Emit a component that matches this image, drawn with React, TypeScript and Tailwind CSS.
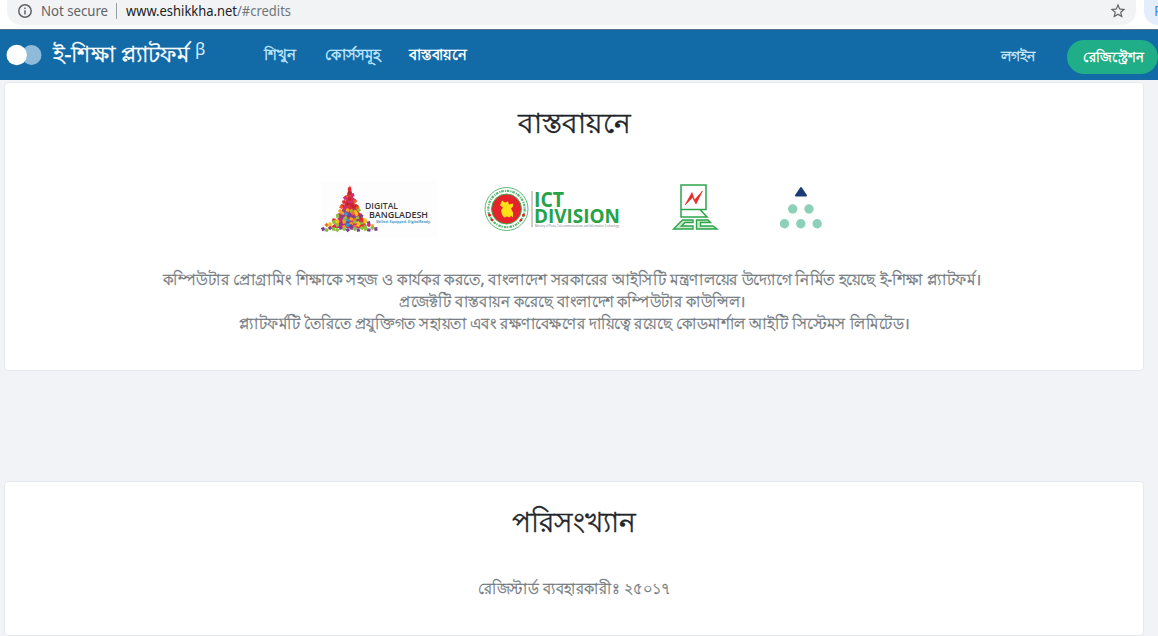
const WARM = ["#e5262c", "#c8232c", "#ee5a23", "#d6247f"];
const MIXED = ["#d6247f", "#7b3f98", "#e5262c", "#f6a21c", "#ee7623", "#8cbf3f", "#2b9fd0", "#f6c21c"];

function confettiPieces() {
  const pieces: { x: number; y: number; c: string; a: number }[] = [];
  for (let row = 0; row < 14; row++) {
    const half = row < 10 ? 0.6 + row * 1.25 : 12 + (row - 9) * 3.6;
    const count = Math.max(1, Math.round(half * 0.62));
    for (let i = 0; i < count; i++) {
      const x = 28.5 + (count === 1 ? 0 : -half + (2 * half * i) / (count - 1));
      const palette = row < 7 ? WARM : MIXED;
      const k = (row * 5 + i * 3 + ((i * row) % 4)) % palette.length;
      pieces.push({ x, y: 9 + row * 3 + ((i * 7 + row) % 3) - 1, c: palette[k], a: (i * 37 + row * 19) % 90 });
    }
  }
  return pieces;
}

function DigitalBangladesh() {
  return (
    <svg width="116" height="56" viewBox="0 0 116 56" className="shrink-0">
      <rect width="116" height="56" fill="#fdfdfd" />
      <path d="M29 4l1.5 6 4 15 6 10 6 12H11l7-12 5-10 4-15z" fill="#d23a45" />
      <path d="M19 35l7-6 9 6 8 12H13z" fill="#d12c78" opacity=".75" />
      {confettiPieces().map((p, i) => (
        <rect key={i} x={p.x - 1.7} y={p.y - 1.6} width="3.4" height="3.2" fill={p.c} transform={`rotate(${p.a} ${p.x} ${p.y})`} />
      ))}
      <text x="44" y="27.5" fontFamily="Open Sans, sans-serif" fontSize="9" fontWeight="600" fill="#3b3b3b" textLength="33" lengthAdjust="spacingAndGlyphs">DIGITAL</text>
      <text x="48" y="36.5" fontFamily="Open Sans, sans-serif" fontSize="9" fontWeight="600" fill="#333" textLength="59" lengthAdjust="spacingAndGlyphs">BANGLADESH</text>
      <text x="55" y="42.3" fontFamily="Open Sans, sans-serif" fontSize="4" fontWeight="700" fill="#409ccb" textLength="55" lengthAdjust="spacingAndGlyphs">Skilled. Equipped. DigitalReady.</text>
    </svg>
  );
}

function IctDivision() {
  return (
    <svg width="138" height="46" viewBox="0 0 138 46" className="shrink-0 overflow-visible">
      <circle cx="23.5" cy="23" r="21.5" fill="#fff" stroke="#5cb973" strokeWidth="1" />
      <circle cx="23.5" cy="23" r="18.2" fill="none" stroke="#5cb973" strokeWidth="2.2" strokeDasharray="2.6 1.1 1.2 .8" />
      <circle cx="23.5" cy="23" r="15" fill="#e6232a" stroke="#3caf52" strokeWidth="1" />
      <path d="M19 14.5l3 2 3-1 1 3 4-1v3l-2 2 2 4v5l-2-2-1 2-3-1-3 1-2-3-1-4 2-3-3-2z" fill="#ffdf16" />
      <g fill="#e6232a">
        <circle cx="6.5" cy="29" r="1.5" /><circle cx="9" cy="34" r="1.3" /><circle cx="40.5" cy="29" r="1.5" /><circle cx="38" cy="34" r="1.3" />
      </g>
      <path d="M49 5v36" stroke="#999" strokeWidth="1" />
      <text x="51" y="20.5" fontFamily="Open Sans, sans-serif" fontSize="21" fontWeight="700" fill="#26a248" textLength="30" lengthAdjust="spacingAndGlyphs">ICT</text>
      <text x="51" y="36.5" fontFamily="Open Sans, sans-serif" fontSize="20" fontWeight="700" fill="#26a248" textLength="86" lengthAdjust="spacingAndGlyphs">DIVISION</text>
      <text x="52" y="41.2" fontFamily="Open Sans, sans-serif" fontSize="3" fill="#777" textLength="84" lengthAdjust="spacingAndGlyphs">Ministry of Posts, Telecommunications and Information Technology</text>
    </svg>
  );
}

function ComputerCouncil() {
  return (
    <svg width="47" height="48" viewBox="0 0 47 48" className="shrink-0 overflow-visible" fill="none" stroke="#2ea44b" strokeWidth="1.5">
      <path d="M10 2h25v24.5H10zM10 26.5V34h26l-7-7.500" />
      <path d="M11.5 37H22v2.5h-8L10.500 43H22v3H2.500zM25.500 37H37l2.500 2.500h-10V43H42l4 3H25.500z" fill="#c8e8cb" strokeWidth="1.4" />
      <path d="M14 22L21 9.500l2.500 7.500L31.500 8 25 21l-3.500-6.500z" fill="#e52a2a" stroke="#e52a2a" strokeWidth=".6" />
    </svg>
  );
}

function DotPyramid() {
  return (
    <svg width="44" height="44" viewBox="0 0 44 44" className="shrink-0">
      <path d="M22 3l5 7.5H17z" fill="#1b3c75" stroke="#1b3c75" strokeWidth="2" strokeLinejoin="round" />
      <g fill="#8bd0b7">
        <circle cx="13.7" cy="24" r="4.7" /><circle cx="30" cy="24" r="4.7" />
        <circle cx="5.5" cy="38.7" r="4.7" /><circle cx="21.8" cy="38.7" r="4.7" /><circle cx="38.2" cy="38.7" r="4.7" />
      </g>
    </svg>
  );
}

function AddressBar() {
  return (
    <div className="flex h-[29px] justify-between bg-white text-[14px] leading-[22px]">
      <div className="ml-[7px] flex h-[25px] w-[1129px] shrink-0 items-start rounded-b-[14px] bg-[#f1f3f4] pl-[11px]">
        <svg width="14" height="14" viewBox="0 0 14 14" className="mt-1 shrink-0" fill="none" stroke="#5f6368" strokeWidth="1.5">
          <circle cx="7" cy="7" r="6.2" /><path d="M7 6.2v4.3M7 3.4v1.5" />
        </svg>
        <span className="ml-[9px] w-[67px] origin-left scale-x-[.942] whitespace-nowrap text-[#5f6368]">Not secure</span>
        <span className="ml-2 mt-[3px] h-4 w-px bg-[#9aa0a6]" />
        <span className="ml-[9px] w-[165px] origin-left scale-x-[.926] whitespace-nowrap text-[#202124]">
          www.eshikkha.net<span className="text-[#70757a]">/#credits</span>
        </span>
        <svg width="18" height="18" viewBox="0 0 24 24" className="ml-auto mr-[9px] mt-[2px] shrink-0" fill="#5f6368">
          <path d="M22 9.24l-7.19-.62L12 2 9.19 8.63 2 9.24l5.46 4.73L5.82 21 12 17.27 18.18 21l-1.63-7.03L22 9.24zM12 15.4l-3.76 2.27 1-4.28-3.32-2.88 4.38-.38L12 6.1l1.71 4.04 4.38.38-3.32 2.88 1 4.28L12 15.4z" />
        </svg>
      </div>
      <div className="h-[25px] w-[14px] overflow-hidden rounded-bl-[14px] bg-[#e4edfb] pl-[10px] text-[#4285f4]">P</div>
    </div>
  );
}

function Navbar() {
  return (
    <header className="flex h-[51px] items-center whitespace-nowrap border-t border-[#56718a] bg-[#126ba6] pl-[6px]">
      <svg width="36" height="22" viewBox="0 0 36 22" className="shrink-0">
        <circle cx="25.5" cy="11" r="10" fill="#8fbbdb" /><circle cx="10.7" cy="11" r="10.2" fill="#fff" />
      </svg>
      <a className="-mt-[5px] ml-[11px] w-[136px] origin-left scale-x-[1.016] text-[22px] leading-8 text-white [-webkit-text-stroke:0.4px]">ই-শিক্ষা প্ল্যাটফর্ম</a>
      <span className="mb-3 ml-[6px] w-[11px] text-[17px] text-[#d5ecfc]">β</span>
      <nav className="-mt-[2px] flex grow text-[15px] font-bold leading-[22px] text-[#b9e4ff]">
        <a className="ml-[58px] w-[32px]">শিখুন</a>
        <a className="ml-[29px] w-[56px] origin-left scale-x-[.98]">কোর্সসমূহ</a>
        <a className="ml-[28px] w-[57px] origin-left scale-x-[.98] text-white">বাস্তবায়নে</a>
      </nav>
      <a className="mt-[2px] w-[34px] text-[14px] leading-[22px] text-[#d5ecfc] [-webkit-text-stroke:0.35px]">লগইন</a>
      <button className="ml-8 mt-1 flex h-[34px] w-[91px] shrink-0 items-center justify-center rounded-full bg-[#1fae87] text-[14px] font-bold leading-[22px] text-white">
        <span className="-mt-px scale-x-[.94]">রেজিস্ট্রেশন</span>
      </button>
    </header>
  );
}

export default function App() {
  return (
    <div className="h-[636px] overflow-hidden bg-[#f1f3f7] font-['Noto_Sans',sans-serif]">
      <AddressBar />
      <Navbar />
      <main className="pl-[4px] pr-[14px] pt-[2px]">
        <section className="flex h-[289px] flex-col items-center rounded-[4px] border border-[#e6e9ed] bg-white text-[#212529]">
          <h2 className="mt-[17px] text-[28px] leading-[44px] [-webkit-text-stroke:0.4px]">বাস্তবায়নে</h2>
          <div className="mt-[37px] flex h-14 items-center pr-1">
            <DigitalBangladesh />
            <div className="ml-[46px]"><IctDivision /></div>
            <div className="-mt-1 ml-[50px]"><ComputerCouncil /></div>
            <div className="-mt-1 ml-[61px]"><DotPyramid /></div>
          </div>
          <div className="mt-[31px] flex flex-col items-center whitespace-nowrap text-[16px] leading-[22px] text-[#747a80] [-webkit-text-stroke:0.3px]">
            <p className="mr-1 scale-x-[.954]">কম্পিউটার প্রোগ্রামিং শিক্ষাকে সহজ ও কার্যকর করতে, বাংলাদেশ সরকারের আইসিটি মন্ত্রণালয়ের উদ্যোগে নির্মিত হয়েছে ই-শিক্ষা প্ল্যাটফর্ম।</p>
            <p className="mr-1 scale-x-[.928]">প্রজেক্টটি বাস্তবায়ন করেছে বাংলাদেশ কম্পিউটার কাউন্সিল।</p>
            <p className="scale-x-[.941]">প্ল্যাটফর্মটি তৈরিতে প্রযুক্তিগত সহায়তা এবং রক্ষণাবেক্ষণের দায়িত্বে রয়েছে কোডমার্শাল আইটি সিস্টেমস লিমিটেড।</p>
          </div>
        </section>
        <section className="mt-[110px] flex h-[155px] flex-col items-center rounded-[4px] border border-[#e6e9ed] bg-white text-[#212529]">
          <h2 className="mt-[17px] text-[28px] leading-[44px] [-webkit-text-stroke:0.4px]">পরিসংখ্যান</h2>
          <p className="mt-[34px] scale-x-[.922] text-[16px] leading-[22px] text-[#747a80] [-webkit-text-stroke:0.3px]">রেজিস্টার্ড ব্যবহারকারীঃ ২৫০১৭</p>
        </section>
      </main>
    </div>
  );
}
